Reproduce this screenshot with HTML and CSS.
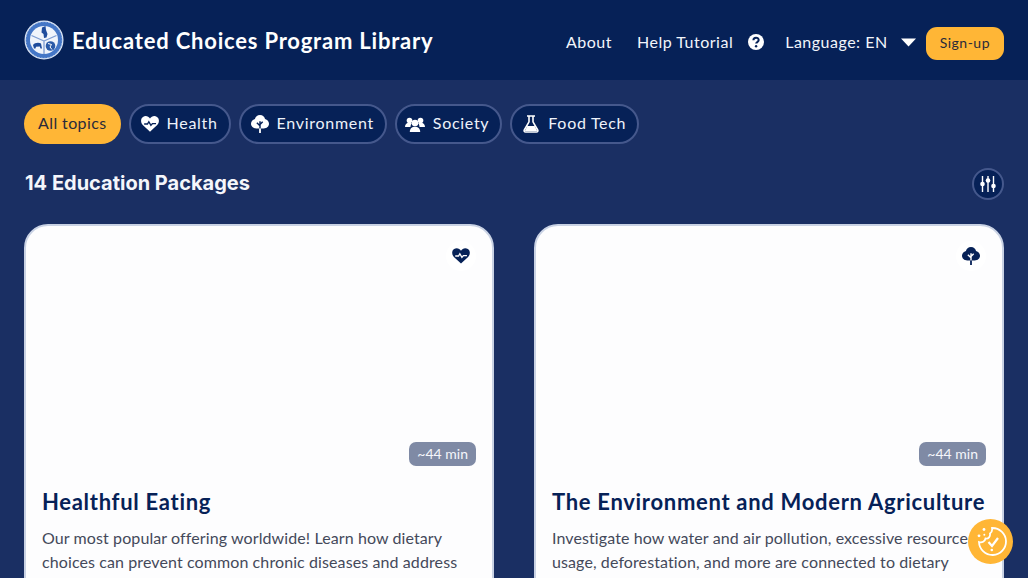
FILE: index.html
```html
<!DOCTYPE html>
<html lang="en">
  <head>
    <meta charset="utf-8">
    <title>Educated Choices Program Library</title>
    <link rel="stylesheet" href="styles.css">
  </head>
  <body>
    <!-- Header -->
    <header class="topbar">
      <a class="brand" href="#">
        <svg class="brand-logo" viewBox="0 0 40 40">
          <circle cx="20" cy="20" r="19.5" fill="#dfe8f6"/>
          <circle cx="20" cy="20" r="18.3" fill="#4476c6"/>
          <circle cx="20" cy="20" r="18.300" fill="none" stroke="#c4d5f0" stroke-width="1" stroke-dasharray="1.500 1.500"/>
          <circle cx="20" cy="20" r="14" fill="#f0f4fb"/>
          <path d="M20 21L7.500 15.500M20 21L32.500 15.500M20 21V34" stroke="#7d9cd2" stroke-width="1.300"/>
          <path d="M18 7.500l3.500-1.500.5 4 1.500 4-1 3.500-2.500.5-.5-4-2-1.500z" fill="#1f4c9c"/>
          <path d="M9 25c1.500-2.500 6-3 8-1.500l1 5h-1.500l-.7-2-3.800.2-.5 1.800h-1.500z" fill="#1f4c9c"/>
          <circle cx="26.500" cy="26" r="4.800" fill="#2a5aa8"/>
          <path d="M24 23.500l3.500 1-1.500 2.500 2 2.500" stroke="#fff" fill="none"/>
        </svg>
        <span class="brand-name">Educated Choices Program Library</span>
      </a>
      <nav class="topnav">
        <a class="topnav-link about-link" href="#">About</a>
        <a class="topnav-link" href="#">Help Tutorial</a>
        <svg class="help-icon" viewBox="0 0 16 16">
          <circle cx="8" cy="8" r="8" fill="#fff"/>
          <path d="M5.400 6.300c0-3.400 5.300-3.400 5.300-.2 0 2-2.600 1.900-2.600 3.500" fill="none" stroke="#062157" stroke-width="2"/>
          <circle cx="8.100" cy="12.200" r="1.200" fill="#062157"/>
        </svg>
        <span class="topnav-link">Language: EN</span>
        <svg class="caret" viewBox="0 0 15 9"><path d="M0 .5h15L7.500 8.500z" fill="#fff"/></svg>
        <a class="signup" href="#">Sign-up</a>
      </nav>
    </header>

    <main class="content">
      <!-- Topic filters -->
      <div class="chips">
        <span class="chip chip-active">All topics</span>
        <span class="chip">
          <svg class="chip-icon" viewBox="0 0 20 18"><use href="#heart"/></svg>
          <span class="chip-label">Health</span>
        </span>
        <span class="chip">
          <svg class="chip-icon" viewBox="0 0 20 20"><use href="#tree"/></svg>
          <span class="chip-label">Environment</span>
        </span>
        <span class="chip">
          <svg class="chip-icon chip-icon-wide" viewBox="0 0 20 16">
            <circle cx="4.500" cy="4.500" r="2.800" fill="currentColor"/>
            <circle cx="15.500" cy="4.500" r="2.800" fill="currentColor"/>
            <path d="M0 11c0-3 2-4.500 4.500-4.500 1 0 1.800.3 2.400.8-1 1-1.400 2.400-1.400 3.700z" fill="currentColor"/>
            <path d="M20 11c0-3-2-4.500-4.500-4.500-1 0-1.800.3-2.400.8 1 1 1.400 2.400 1.400 3.700z" fill="currentColor"/>
            <circle cx="10" cy="7" r="3.300" fill="currentColor"/>
            <path d="M4.800 16c0-3.500 2.200-5.200 5.200-5.200s5.200 1.700 5.200 5.200z" fill="currentColor"/>
          </svg>
          <span class="chip-label">Society</span>
        </span>
        <span class="chip">
          <svg class="chip-icon" viewBox="0 0 16 18">
            <path d="M4 1h8M6 1.500v5.300L1.300 15c-.6 1.100.1 2 1.200 2h11c1.100 0 1.800-.9 1.200-2L10 6.800V1.500" fill="none" stroke="currentColor" stroke-width="1.600"/>
            <path d="M4.300 11h7.400l2.500 5H1.800z" fill="currentColor"/>
          </svg>
          <span class="chip-label">Food Tech</span>
        </span>
      </div>

      <div class="list-head">
        <h2 class="list-title">14 Education Packages</h2>
        <button class="filter-btn">
          <svg viewBox="0 0 16 16" width="16" height="16">
            <path d="M2.500 0v16M8 0v16M13.500 0v16" stroke="#fff" stroke-width="1.400"/>
            <circle cx="2.500" cy="8" r="2.300" fill="#fff"/>
            <circle cx="8" cy="4.500" r="2.300" fill="#fff"/>
            <circle cx="13.500" cy="10" r="2.300" fill="#fff"/>
          </svg>
        </button>
      </div>

      <!-- Package cards -->
      <div class="cards">
        <article class="card">
          <div class="card-media">
            <span class="card-topic">
              <svg viewBox="0 0 20 18" width="18" height="16"><use href="#heart"/></svg>
            </span>
            <span class="card-time">~44 min</span>
          </div>
          <h3 class="card-title">Healthful Eating</h3>
          <p class="card-text">Our most popular offering worldwide! Learn how dietary choices can prevent common chronic diseases and address</p>
        </article>
        <article class="card">
          <div class="card-media">
            <span class="card-topic">
              <svg viewBox="0 0 20 20" width="18" height="18"><use href="#tree"/></svg>
            </span>
            <span class="card-time">~44 min</span>
          </div>
          <h3 class="card-title">The Environment and Modern Agriculture</h3>
          <p class="card-text">Investigate how water and air pollution, excessive resource usage, deforestation, and more are connected to dietary</p>
        </article>
      </div>
    </main>

    <!-- Cookie button -->
    <button class="cookie-btn">
      <svg viewBox="0 0 32 32" width="32" height="32" fill="none" stroke="#fff" stroke-width="1.800">
        <path d="M17 2A13.500 13.500 0 1 1 4 16c3 1 6-.5 6.500-3.500 3 .5 5-2 4.500-5C16.500 6.500 17.500 4.500 17 2z"/>
        <path d="M13.500 16l3.500 4L23 12" stroke-width="2.200"/>
        <circle cx="16.800" cy="24" r="1.300" fill="#fff" stroke="none"/>
        <circle cx="9" cy="3.500" r="1.400" fill="#fff" stroke="none"/>
        <circle cx="4" cy="9.800" r="1.400" fill="#fff" stroke="none"/>
        <circle cx="9.300" cy="8.800" r="1" fill="#fff" stroke="none"/>
      </svg>
    </button>

    <!-- Shared icons -->
    <svg class="icon-defs">
      <symbol id="heart" viewBox="0 0 20 18">
        <path fill="currentColor" d="M10 17.500L2 10C-.8 7-.4 2.800 2.200 1.100 5-.7 8.300.2 10 3c1.700-2.800 5-3.700 7.800-1.900 2.600 1.700 3 5.900.2 8.900z"/>
        <path d="M3.500 9h3.700l1.500-2.500 2.300 4 1.700-2h4" fill="none" stroke="var(--heart-line)" stroke-width="1.500"/>
      </symbol>
      <symbol id="tree" viewBox="0 0 20 20">
        <path fill="currentColor" d="M10 0c3 0 5.200 2 5.600 4.500 2.600.6 4.400 2.800 4.400 5.300 0 3-2.600 5.200-5.800 5.200H5.800C2.600 15 0 12.800 0 9.800 0 7.300 1.800 5.100 4.400 4.500 4.800 2 7 0 10 0z"/>
        <path d="M10 15V7M10 12L6.500 8.500M10 10.500l3-3" fill="none" stroke="var(--tree-line)" stroke-width="1.600"/>
        <path d="M10 15v5" stroke="currentColor" stroke-width="2"/>
      </symbol>
    </svg>
  </body>
</html>
```

FILE: styles.css
```css
* {
  box-sizing: border-box;
}

html,
body {
  height: 100%;
  overflow: hidden;
}

body {
  margin: 0;
  background-color: #1a2f63;
  font-family: "Lato", sans-serif;
  --heart-line: #062157;
  --tree-line: #062157;
}

a {
  color: inherit;
  text-decoration: none;
}

.icon-defs {
  display: none;
}

/* header */
.topbar {
  display: flex;
  align-items: center;
  justify-content: space-between;
  height: 80px;
  padding: 0 24px;
  background-color: #062157;
  color: #fff;
}

.brand {
  display: flex;
  align-items: center;
  gap: 8px;
}

.brand-logo {
  width: 40px;
  height: 40px;
}

.brand-name {
  font-size: 22px;
  font-weight: 700;
  letter-spacing: 0.8px;
}

.topnav {
  display: flex;
  align-items: center;
  margin-top: 3px;
}

.topnav-link {
  font-size: 16px;
  letter-spacing: 0.5px;
  color: #f2f5fb;
}

.about-link {
  margin-right: 25px;
}

.help-icon {
  width: 16px;
  height: 16px;
  margin: 0 21px 0 15px;
}

.caret {
  width: 15px;
  height: 9px;
  margin: 2px 10px 0 13px;
}

.signup {
  display: flex;
  align-items: center;
  height: 33px;
  margin-top: 4px;
  padding: 0 14px 2px;
  border-radius: 11px;
  background-color: #ffb636;
  color: #2a2a3a;
  font-size: 14px;
  letter-spacing: 0.5px;
}

/* filters */
.content {
  padding: 24px 24px 0;
}

.chips {
  display: flex;
  gap: 8px;
}

.chip {
  display: flex;
  align-items: center;
  gap: 8px;
  height: 40px;
  padding: 0 11px 0 10px;
  border: 2px solid #45588c;
  border-radius: 20px;
  background-color: #062157;
  color: #eef2fa;
  font-size: 16px;
  letter-spacing: 0.7px;
}

.chip-label {
  padding-bottom: 3px;
}

.chip-active {
  padding: 0 14px 3px;
  border: none;
  background-color: #ffb636;
  color: #2a2a3a;
  letter-spacing: 0.4px;
}

.chip-icon {
  width: 18px;
  height: 18px;
  color: #fff;
}

.chip-icon-wide {
  width: 20px;
  margin-left: -2px;
}

.list-head {
  display: flex;
  align-items: center;
  justify-content: space-between;
  margin-top: 24px;
  padding-left: 1px;
}

.list-title {
  margin: 0 0 2px;
  color: #f4f6fb;
  font-family: "Inter", sans-serif;
  font-size: 20px;
  font-weight: 700;
}

.filter-btn {
  display: flex;
  align-items: center;
  justify-content: center;
  width: 32px;
  height: 32px;
  padding: 0;
  border: 2px solid #45588c;
  border-radius: 50%;
  background-color: #062157;
}

/* cards */
.cards {
  display: grid;
  grid-template-columns: 470px 470px;
  gap: 40px;
  margin-top: 24px;
}

.card {
  height: 460px;
  padding: 0 16px;
  border: 2px solid #c9d2e4;
  border-radius: 24px;
  background-color: #fdfdfe;
  --heart-line: #fdfdfe;
  --tree-line: #fdfdfe;
}

.card-media {
  position: relative;
  height: 240px;
}

.card-topic {
  position: absolute;
  top: 15px;
  right: 0;
  display: flex;
  align-items: center;
  justify-content: center;
  width: 30px;
  height: 30px;
  border-radius: 50%;
  background-color: #ffffff;
  color: #062157;
}

.card-time {
  position: absolute;
  right: 0;
  bottom: 0;
  display: flex;
  align-items: center;
  height: 24px;
  padding: 0 8px 1px;
  border-radius: 7px;
  background-color: #7f8aa5;
  color: #f4f6fb;
  font-size: 14px;
}

.card-title {
  margin: 23px 0 0;
  color: #062157;
  font-size: 22px;
  font-weight: 700;
  line-height: 26px;
  letter-spacing: 0.7px;
  white-space: nowrap;
}

.card-text {
  margin: 11px 0 0;
  color: #44495a;
  font-size: 16px;
  line-height: 24px;
  letter-spacing: 0.1px;
}

/* cookie button */
.cookie-btn {
  position: fixed;
  right: 15px;
  bottom: 14px;
  display: flex;
  align-items: center;
  justify-content: center;
  width: 45px;
  height: 45px;
  padding: 0;
  border: none;
  border-radius: 50%;
  background-color: #ffb636;
}
```
